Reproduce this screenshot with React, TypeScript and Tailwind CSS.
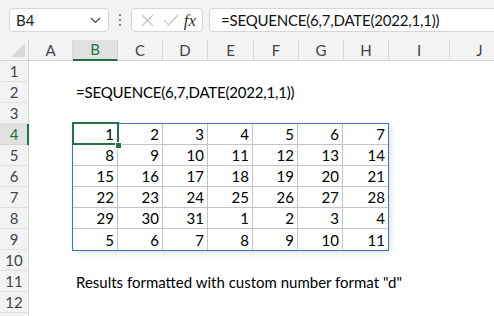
import React from "react";

const FONT = { fontFamily: "Lato, 'Liberation Sans', sans-serif" };

const cols = [
  { n: "A", w: "w-[44px]" },
  { n: "B", w: "w-[45px]", sel: true },
  { n: "C", w: "w-[45px]" },
  { n: "D", w: "w-[45px]" },
  { n: "E", w: "w-[46px]" },
  { n: "F", w: "w-[45px]" },
  { n: "G", w: "w-[45px]" },
  { n: "H", w: "w-[45px]" },
  { n: "I", w: "w-[61px]" },
  { n: "J", w: "w-[60px]" },
];

const data = [
  [1, 2, 3, 4, 5, 6, 7],
  [8, 9, 10, 11, 12, 13, 14],
  [15, 16, 17, 18, 19, 20, 21],
  [22, 23, 24, 25, 26, 27, 28],
  [29, 30, 31, 1, 2, 3, 4],
  [5, 6, 7, 8, 9, 10, 11],
];

export default function App() {
  return (
    <div className="w-[494px] h-[316px] overflow-hidden bg-white text-black" style={FONT}>
      {/* toolbar */}
      <div className="h-[40px] bg-[#f3f3f3] flex items-center pl-[9px] pr-0">
        <div className="w-[100px] shrink-0 h-[24px] bg-white border border-[#d6d6d6] rounded-[4px] flex items-center justify-between pl-[6px] pr-[7px]">
          <span className="text-[15px] leading-none text-[#222]">B4</span>
          <svg width="11" height="7" viewBox="0 0 11 7">
            <path d="M1 1 L5.5 5.5 L10 1" fill="none" stroke="#444" strokeWidth="1.2" />
          </svg>
        </div>
        <div className="w-[22px] shrink-0 flex flex-col items-center gap-[3px]">
          <span className="w-[2px] h-[2px] bg-[#8a8a8a]" />
          <span className="w-[2px] h-[2px] bg-[#8a8a8a]" />
          <span className="w-[2px] h-[2px] bg-[#8a8a8a]" />
        </div>
        <div className="w-[72px] shrink-0 h-[24px] bg-white border border-[#d6d6d6] rounded-[4px] flex items-center pl-[9px] pr-[4px]">
          <svg width="13" height="13" viewBox="0 0 13 13">
            <path d="M1 1 L12 12 M12 1 L1 12" stroke="#c2c2c2" strokeWidth="1.1" />
          </svg>
          <svg width="16" height="12" viewBox="0 0 16 12" className="ml-[9px]">
            <path d="M1 6 L5.5 11 L15 1" fill="none" stroke="#c2c2c2" strokeWidth="1.1" />
          </svg>
          <span
            className="ml-auto mr-[2px] text-[17px] italic leading-none text-[#333]"
            style={{ fontFamily: "'Liberation Serif', serif" }}
          >
            fx
          </span>
        </div>
        <div className="ml-[6px] flex-1 h-[24px] bg-white border border-[#d6d6d6] border-r-0 rounded-l-[4px] flex items-center pl-[11px]">
          <span className="text-[15px] leading-none text-[#111] tracking-[-0.2px]">=SEQUENCE(6,7,DATE(2022,1,1))</span>
        </div>
      </div>

      <div className="flex">
        {/* row headers */}
        <div className="w-[29px] shrink-0 flex flex-col bg-[#f3f3f3] border-r border-[#d4d4d4] text-[15px] text-[#444]">
          <div className="h-[21px] relative border-b border-[#d4d4d4]">
            <svg width="14" height="14" viewBox="0 0 14 14" className="absolute right-[3px] bottom-[3px]">
              <path d="M14 0 L14 14 L0 14 Z" fill="#d9d9d9" />
            </svg>
          </div>
          {Array.from({ length: 13 }, (_, i) => i + 1).map((r) => (
            <div
              key={r}
              className={
                r === 4
                  ? "h-[21px] flex items-center justify-center border-b border-[#d4d4d4] bg-[#e1e1e1] text-[#217346] relative"
                  : "h-[21px] flex items-center justify-center border-b border-[#e0e0e0]"
              }
            >
              {r < 13 ? r : ""}
              {r === 4 && <span className="absolute right-[-1px] top-0 w-[2px] h-[21px] bg-[#217346]" />}
            </div>
          ))}
        </div>

        <div className="flex-1 min-w-0 overflow-hidden flex flex-col">
          {/* column headers */}
          <div className="h-[21px] flex bg-[#f3f3f3] text-[15px] text-[#444]">
            {cols.map((c) => (
              <div
                key={c.n}
                className={
                  c.sel
                    ? `${c.w} shrink-0 flex items-center justify-center bg-[#e1e1e1] text-[#217346] border-r border-[#d4d4d4] border-b-2 border-b-[#217346]`
                    : `${c.w} shrink-0 flex items-center justify-center border-r border-[#d9d9d9] border-b border-b-[#d4d4d4]`
                }
              >
                {c.n}
              </div>
            ))}
          </div>
          <div className="h-[21px]" />
          <div className="h-[21px] flex items-center pl-[47px] text-[15px] tracking-[-0.2px]">=SEQUENCE(6,7,DATE(2022,1,1))</div>
          <div className="h-[20px]" />
          {/* table */}
          <div className="ml-[43px] w-[317px] relative border border-[#4472c4] shadow-[2px_2px_6px_rgba(0,0,0,0.12)]">
            <div className="grid grid-cols-7">
              {data.flat().map((v, i) => {
                const col = i % 7;
                const row = Math.floor(i / 7);
                return (
                  <div
                    key={i}
                    className={`h-[21px] flex items-end justify-end pr-[3px] pb-[1px] text-[15px] leading-[18px] ${
                      col < 6 ? "border-r border-[#c4c4c4]" : ""
                    } ${row < 5 ? "border-b border-[#c4c4c4]" : ""}`}
                  >
                    {v}
                  </div>
                );
              })}
            </div>
            {/* selection */}
            <div className="absolute left-[-1px] top-[-2px] w-[47px] h-[23px] border-2 border-[#217346]" />
            <div className="absolute left-[42px] top-[18px] w-[5px] h-[5px] bg-[#217346] border border-white box-content" />
          </div>
          <div className="h-[21px]" />
          <div className="h-[21px] flex items-center pl-[47px] text-[15px]">
            Results formatted with custom number format "d"
          </div>
          <div className="h-[21px]" />
        </div>
      </div>
    </div>
  );
}
